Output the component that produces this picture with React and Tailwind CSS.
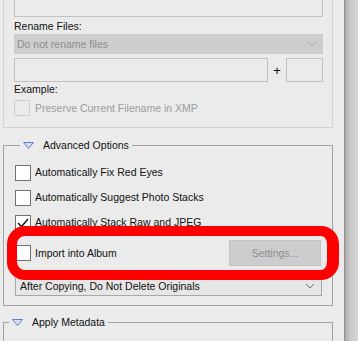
import React from "react";

const font = { fontFamily: '"Liberation Sans", Arial, sans-serif' };

function Chevron({ color }) {
  return (
    <svg width="10" height="6" viewBox="0 0 10 6" className="shrink-0">
      <polyline points="1,1 5,5 9,1" fill="none" stroke={color} strokeWidth="1" />
    </svg>
  );
}

function Tri() {
  return (
    <svg width="11" height="7" viewBox="0 0 11 7" className="shrink-0">
      <polygon points="0.5,0.5 10.5,0.5 5.5,6.5" fill="#d6e0f5" stroke="#5b7fcf" strokeWidth="1" />
    </svg>
  );
}

function Box({ checked, disabled }) {
  return (
    <div
      className={
        "w-[16px] h-[16px] shrink-0 border flex items-center justify-center " +
        (disabled ? "border-[#cdcdcd] bg-[#ebebeb]" : "border-[#707070] bg-white")
      }
    >
      {checked && (
        <svg width="12" height="10" viewBox="0 0 12 10">
          <polyline points="1,5 4.5,8.5 11,1" fill="none" stroke="#222" strokeWidth="1.6" />
        </svg>
      )}
    </div>
  );
}

function Row({ children, checked }) {
  return (
    <div className="h-[25px] flex items-center gap-[4px]">
      <Box checked={checked} />
      <span className="text-[10.5px] leading-[13px] text-[#111]">{children}</span>
    </div>
  );
}

export default function App() {
  return (
    <div className="relative w-[358px] h-[341px] overflow-hidden bg-[#ebebeb] flex" style={font}>
      <div className="w-[344px] shrink-0">
        {/* top group */}
        <div className="ml-[3px] w-[330px] h-[128px] border-x border-b border-[#d2d2d2] pl-[10px] pr-[9px]">
          <div className="h-[17px] border-x border-b border-[#c2c2c2]" />
          <div className="mt-[3px] text-[10.5px] leading-[13px] text-[#111]">Rename Files:</div>
          <div className="mt-[1px] h-[20px] bg-[#cdcdcd] flex items-center justify-between pl-[3px] pr-[6px]">
            <span className="text-[10.5px] leading-[13px] text-[#8e8e8e]">Do not rename files</span>
            <Chevron color="#a9a9a9" />
          </div>
          <div className="mt-[4px] h-[24px] flex items-center">
            <div className="w-[254px] h-[24px] border border-[#c2c2c2]" />
            <div className="w-[18px] text-center text-[13px] leading-[13px] text-black">+</div>
            <div className="w-[37px] h-[24px] border border-[#c2c2c2]" />
          </div>
          <div className="mt-[1px] text-[10.5px] leading-[13px] text-[#111]">Example:</div>
          <div className="mt-[4px] flex items-center gap-[5px]">
            <Box disabled />
            <span className="text-[10.5px] leading-[13px] text-[#9b9b9b]">Preserve Current Filename in XMP</span>
          </div>
        </div>

        {/* Advanced Options */}
        <fieldset className="mt-[11px] ml-[3px] w-[330px] border border-[#a3a3a3] pl-[11px] pr-[10px] pb-[9px]">
          <legend className="ml-[5px] px-[3px] flex items-center gap-[9px] h-[13px]">
            <Tri />
            <span className="text-[10.5px] leading-[13px] text-[#111]">Advanced Options</span>
          </legend>
          <div className="pt-[8px]">
            <Row>Automatically Fix Red Eyes</Row>
            <Row>Automatically Suggest Photo Stacks</Row>
            <Row checked>Automatically Stack Raw and JPEG</Row>
            <div className="mt-[5px] h-[26px] flex items-center justify-between">
              <div className="flex items-center gap-[4px]">
                <Box />
                <span className="text-[10.5px] leading-[13px] text-[#111]">Import into Album</span>
              </div>
              <div className="mr-[1px] w-[92px] h-[26px] bg-[#cdcdcd] border border-[#c4c4c4] flex items-center justify-center text-[10.5px] leading-[13px] text-[#8d8d8d]">
                Settings...
              </div>
            </div>
            <div className="mt-[10px] h-[20px] bg-[#e6e6e6] border border-[#a8a8a8] flex items-center justify-between pl-[4px] pr-[6px]">
              <span className="text-[10.5px] leading-[13px] text-[#111]">After Copying, Do Not Delete Originals</span>
              <Chevron color="#6a6a6a" />
            </div>
          </div>
        </fieldset>

        {/* Apply Metadata */}
        <fieldset className="mt-[10px] ml-[3px] w-[330px] h-[60px] border border-[#a3a3a3]">
          <legend className="ml-[5px] px-[3px] flex items-center gap-[9px] h-[13px]">
            <Tri />
            <span className="text-[10.5px] leading-[13px] text-[#111]">Apply Metadata</span>
          </legend>
        </fieldset>
      </div>
      <div className="w-[14px] shrink-0 border-l border-[#8e8e8e] bg-[linear-gradient(to_right,#a9a9a9,#c6c6c6_35%,#d7d7d7)]" />

      {/* red highlight overlay */}
      <div className="absolute left-[7px] top-[226px] w-[332px] h-[54px] border-[10px] border-r-[12px] border-[#fe0000] rounded-[18px] pointer-events-none" />
    </div>
  );
}
